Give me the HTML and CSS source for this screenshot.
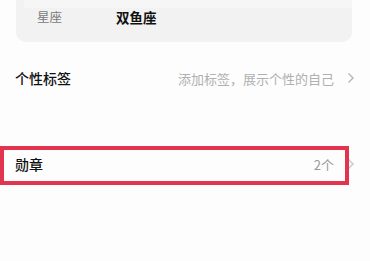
FILE: index.html
```html
<!DOCTYPE html>
<html lang="zh">
<head>
<meta charset="utf-8">
<link rel="stylesheet" href="styles.css">
</head>
<body>
<div class="page">
  <div class="card">
    <div class="card-top"></div>
    <div class="info-row">
      <span class="info-label">星座</span>
      <span class="info-value">双鱼座</span>
    </div>
  </div>

  <div class="row row-tags">
    <span class="row-title">个性标签</span>
    <span class="row-value light">添加标签，展示个性的自己</span>
    <svg class="chev" width="8" height="12" viewBox="0 0 8 12"><path d="M1.5 1.5 L6 6 L1.5 10.5" fill="none" stroke="#b5b5b5" stroke-width="1.4"/></svg>
  </div>

  <div class="row row-medal">
    <span class="row-title">勋章</span>
    <span class="row-value">2个</span>
    <svg class="chev" width="8" height="12" viewBox="0 0 8 12"><path d="M1.5 1.5 L6 6 L1.5 10.5" fill="none" stroke="#c8c8c8" stroke-width="1.4"/></svg>
    <div class="highlight"></div>
  </div>
</div>
</body>
</html>
```

FILE: styles.css
```css
html, body {
  margin: 0;
  padding: 0;
  background: #fdfdfd;
}
body {
  width: 370px;
  height: 261px;
  overflow: hidden;
  font-family: "Noto Sans CJK SC", "Noto Sans", sans-serif;
}
.page {
  display: flex;
  flex-direction: column;
}
.card {
  margin: 0 18px 0 16px;
  height: 42px;
  background: #f2f2f2;
  border-radius: 0 0 10px 10px;
  display: flex;
  flex-direction: column;
}
.card-top {
  height: 8px;
  margin-left: 8px;
  background: #f6f6f6;
}
.info-row {
  display: flex;
  align-items: center;
  height: 17px;
  padding-left: 21px;
}
.info-label {
  font-size: 12.5px;
  color: #7a7a7a;
  width: 79px;
}
.info-value {
  font-size: 13.5px;
  font-weight: 700;
  color: #111;
}
.row {
  position: relative;
  display: flex;
  align-items: center;
  height: 36px;
  padding-left: 15px;
  padding-right: 15px;
}
.row-tags {
  margin-top: 18px;
}
.row-medal {
  margin-top: 50px;
}
.row-title {
  font-size: 14px;
  font-weight: 500;
  color: #111;
  flex: 1;
}
.row-value {
  font-size: 13px;
  color: #9a9a9a;
  margin-right: 13px;
}
.row-value.light {
  color: #b0b0b0;
}
.chev {
  display: block;
}
.highlight {
  position: absolute;
  left: 0;
  top: 0;
  width: 341px;
  height: 31px;
  border: 4px solid #e2344f;
}
```
